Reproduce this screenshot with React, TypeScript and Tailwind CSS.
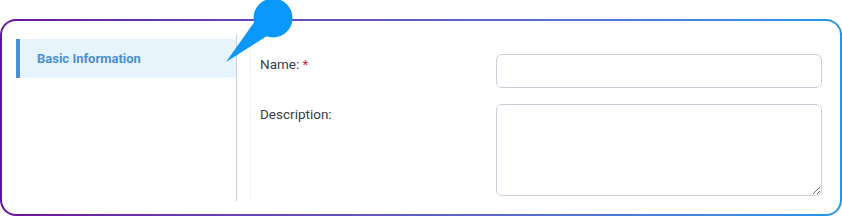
import React from 'react';

const Pin = () => (
  <svg
    className="absolute left-[220px] top-0"
    width="80"
    height="70"
    viewBox="0 0 80 70"
  >
    <path d="M35 21 L6 62 L47 36 Z" fill="#0a98fb" />
    <circle cx="53" cy="18" r="19.5" fill="#0a98fb" />
  </svg>
);

const App = () => {
  return (
    <div
      className="relative w-[842px] h-[216px] bg-white pt-[19px]"
      style={{ fontFamily: 'Roboto, "Liberation Sans", sans-serif' }}
    >
      <div className="h-[197px] w-[842px] rounded-[16px] bg-gradient-to-r from-[#6a0f9e] to-[#1e98f0] p-[2px]">
        <div className="flex h-full w-full rounded-[14px] bg-white pl-[14px] pr-[18px] pt-[13px] pb-[13px]">
          {/* sidebar */}
          <div className="w-[221px] shrink-0 border-r border-[#c9cde0] pt-[5px]">
            <div className="flex h-[39px] items-center border-l-4 border-[#4a90d9] bg-[#e8f4fc] pl-[17px] text-[13px] font-bold text-[#4a8fd6]">
              Basic Information
            </div>
          </div>

          {/* form */}
          <div className="flex-1 pl-[13px]">
            <div className="h-full border-l border-[#f4f5f8] pl-[9px] pt-[20px]">
              <div className="grid grid-cols-[236px_1fr] gap-y-[16px]">
                <div className="text-[13.5px] text-[#3b3b48]">
                  Name: <span className="text-[#c62848]">*</span>
                </div>
                <input
                  type="text"
                  className="h-[34px] w-full rounded-[6px] border border-[#cdcdda] bg-white px-2 outline-none"
                />
                <div className="text-[13.5px] text-[#3b3b48]">Description:</div>
                <textarea className="block h-[92px] w-full rounded-[6px] border border-[#cdcdda] bg-white px-2 outline-none" />
              </div>
            </div>
          </div>
        </div>
      </div>
      <Pin />
    </div>
  );
};

export default App;
